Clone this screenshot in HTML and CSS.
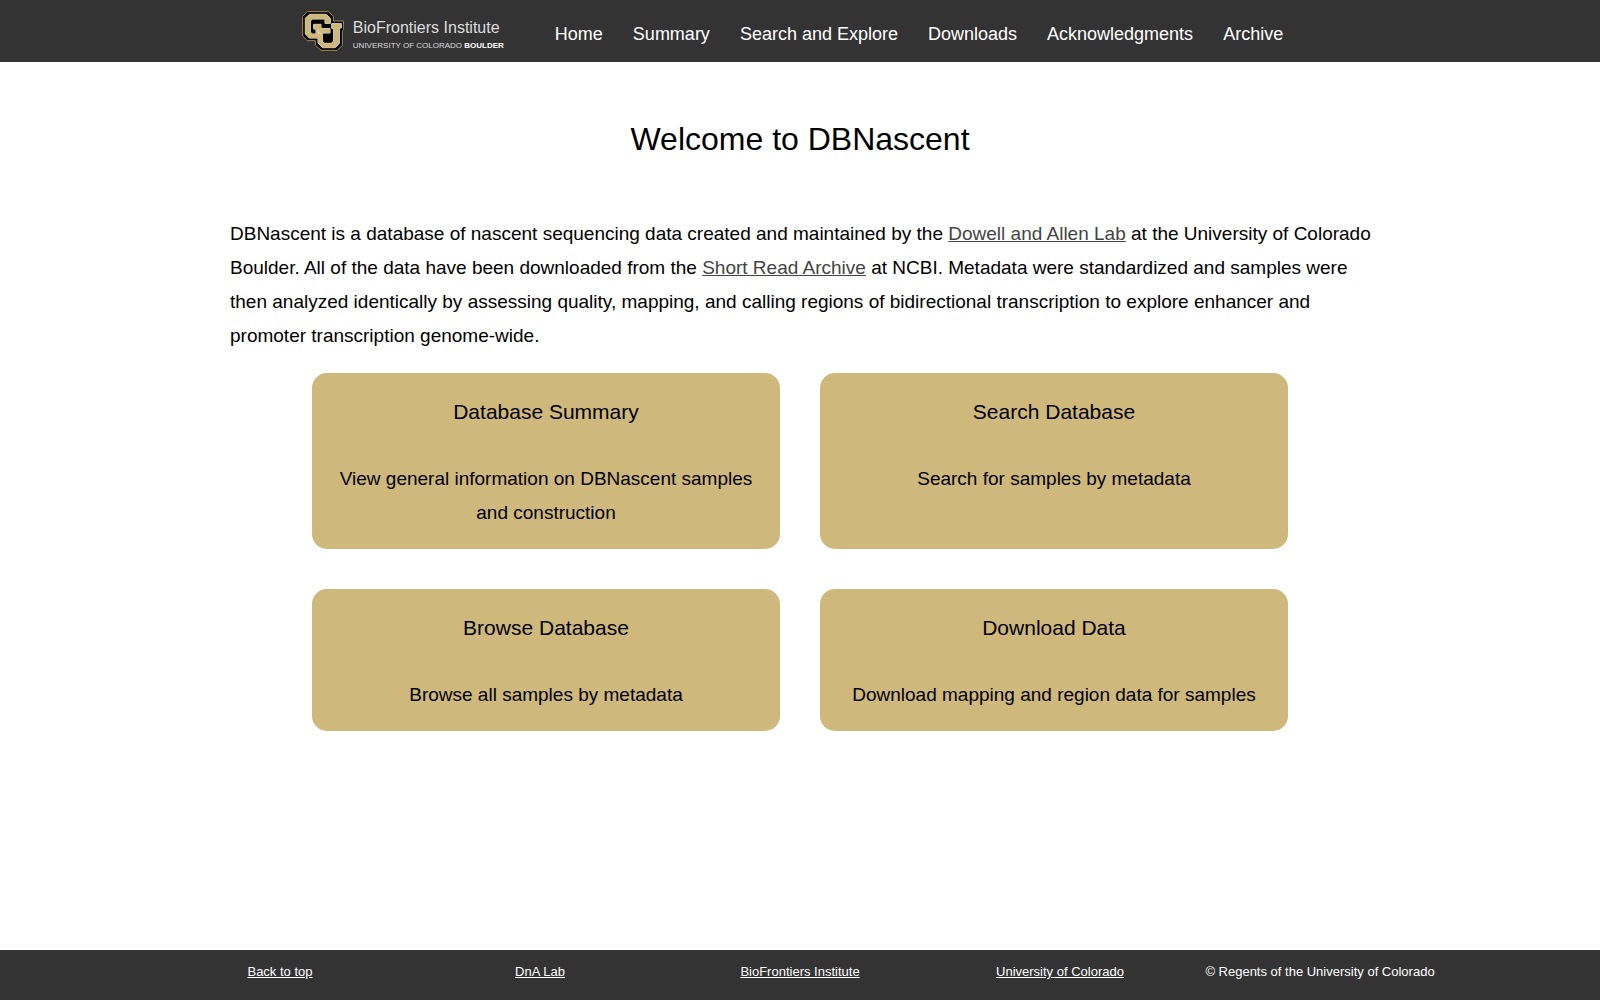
FILE: index.html
```
<!DOCTYPE html>
<html lang="en">
<head>
    <meta charset="UTF-8">
    <meta name="viewport" content="width=device-width, initial-scale=1.0">
    <title>DBNascent</title>
    <link rel="stylesheet" href="styles.css">
</head>
<body id="top">
    <header class="navbar">
        <a class="logo" href="#">
            <svg class="logo-mark" viewBox="24 17 126 120" aria-hidden="true">
                <path d="M40 19H103L118 33V47H149V73L145 78V120L130 135H81L64 119V106H40L26 92V33Z" fill="#000" stroke="#a08c55" stroke-width="3"/>
                <g fill="#cfb87c" stroke="#f2ecdc" stroke-width="3" stroke-linejoin="miter" paint-order="stroke">
                    <path d="M46 27H97L109 39V54H93V45L89 41H55L49 47V80L55 86H66V71H59V57H81V70H108V83H85V108L91 114H112L119 107V69H113V55H142V68H136V114L124 127H86L72 113V98H46L34 86V39Z"/>
                </g>
                <path d="M73 71V84H83" fill="none" stroke="#f2ecdc" stroke-width="2"/>
            </svg>
            <span class="logo-text">
                <span class="logo-name">BioFrontiers Institute</span>
                <span class="logo-school">UNIVERSITY OF COLORADO <b>BOULDER</b></span>
            </span>
        </a>
        <nav class="menu">
            <a href="#">Home</a>
            <a href="#">Summary</a>
            <a href="#">Search and Explore</a>
            <a href="#">Downloads</a>
            <a href="#">Acknowledgments</a>
            <a href="#">Archive</a>
        </nav>
    </header>

    <main class="content">
        <h1>Welcome to DBNascent</h1>
        <p class="intro">
            DBNascent is a database of nascent sequencing data created and maintained by the
            <a href="#">Dowell and Allen Lab</a> at the University of Colorado Boulder.
            All of the data have been downloaded from the <a href="#">Short Read Archive</a> at NCBI.
            Metadata were standardized and samples were then analyzed identically by assessing quality,
            mapping, and calling regions of bidirectional transcription to explore enhancer and promoter
            transcription genome-wide.
        </p>
        <div class="cards">
            <a class="card" href="#">
                <h2>Database Summary</h2>
                <p>View general information on DBNascent samples and construction</p>
            </a>
            <a class="card" href="#">
                <h2>Search Database</h2>
                <p>Search for samples by metadata</p>
            </a>
            <a class="card" href="#">
                <h2>Browse Database</h2>
                <p>Browse all samples by metadata</p>
            </a>
            <a class="card" href="#">
                <h2>Download Data</h2>
                <p>Download mapping and region data for samples</p>
            </a>
        </div>
    </main>

    <footer class="footer">
        <div class="footer-row">
            <a href="#top">Back to top</a>
            <a href="#">DnA Lab</a>
            <a href="#">BioFrontiers Institute</a>
            <a href="#">University of Colorado</a>
            <span>© Regents of the University of Colorado</span>
        </div>
    </footer>
</body>
</html>
```
FILE: styles.css
```
* {
    box-sizing: border-box;
}
body {
    display: flex;
    flex-direction: column;
    min-height: 100vh;
    margin: 0;
    font-family: "Liberation Sans", Arial, sans-serif;
    color: #000;
    background-color: #fff;
}

/* top bar */
.navbar {
    display: flex;
    justify-content: center;
    align-items: center;
    gap: 36px;
    padding: 11px 0;
    background-color: #333;
}
.logo {
    display: flex;
    align-items: center;
    gap: 9px;
    color: #ddd;
    text-decoration: none;
}
.logo-mark {
    width: 42px;
    height: 40px;
}
.logo-text {
    display: flex;
    flex-direction: column;
    gap: 4px;
    padding-top: 8px;
    white-space: nowrap;
}
.logo-name {
    font-size: 16px;
    line-height: 18px;
}
.logo-school {
    font-size: 8px;
    line-height: 10px;
}
.logo-school b {
    color: #fff;
}
.menu {
    display: flex;
    padding-top: 6px;
}
.menu a {
    padding: 0 15px;
    font-size: 18px;
    line-height: 20px;
    color: #fff;
    text-decoration: none;
}

/* page */
.content {
    flex: 1;
    width: 100%;
    max-width: 1140px;
    margin: 0 auto;
}
h1 {
    margin: 58px 0 59px;
    font-size: 32px;
    font-weight: normal;
    line-height: 38px;
    text-align: center;
}
.intro {
    margin: 0 -10px 20px 0;
    font-size: 19px;
    line-height: 34px;
}
.intro a {
    color: #444;
}
.cards {
    display: grid;
    grid-template-columns: 1fr 1fr;
    gap: 40px;
    max-width: 976px;
    margin: 0 auto;
}
.card {
    padding: 22px 20px 19px;
    border-radius: 15px;
    background-color: #cfb87c;
    color: #000;
    text-align: center;
    text-decoration: none;
}
.card h2 {
    margin: 0 0 33px;
    font-size: 21px;
    font-weight: normal;
    line-height: 34px;
}
.card p {
    margin: 0;
    font-size: 19px;
    line-height: 34px;
}

/* bottom bar */
.footer {
    padding: 12px 0 18px;
    background-color: #333;
    color: #fff;
}
.footer-row {
    display: grid;
    grid-template-columns: repeat(5, 1fr);
    justify-items: center;
    max-width: 1300px;
    margin: 0 auto;
    font-size: 13px;
    line-height: 20px;
}
.footer a {
    color: #fff;
}
```
